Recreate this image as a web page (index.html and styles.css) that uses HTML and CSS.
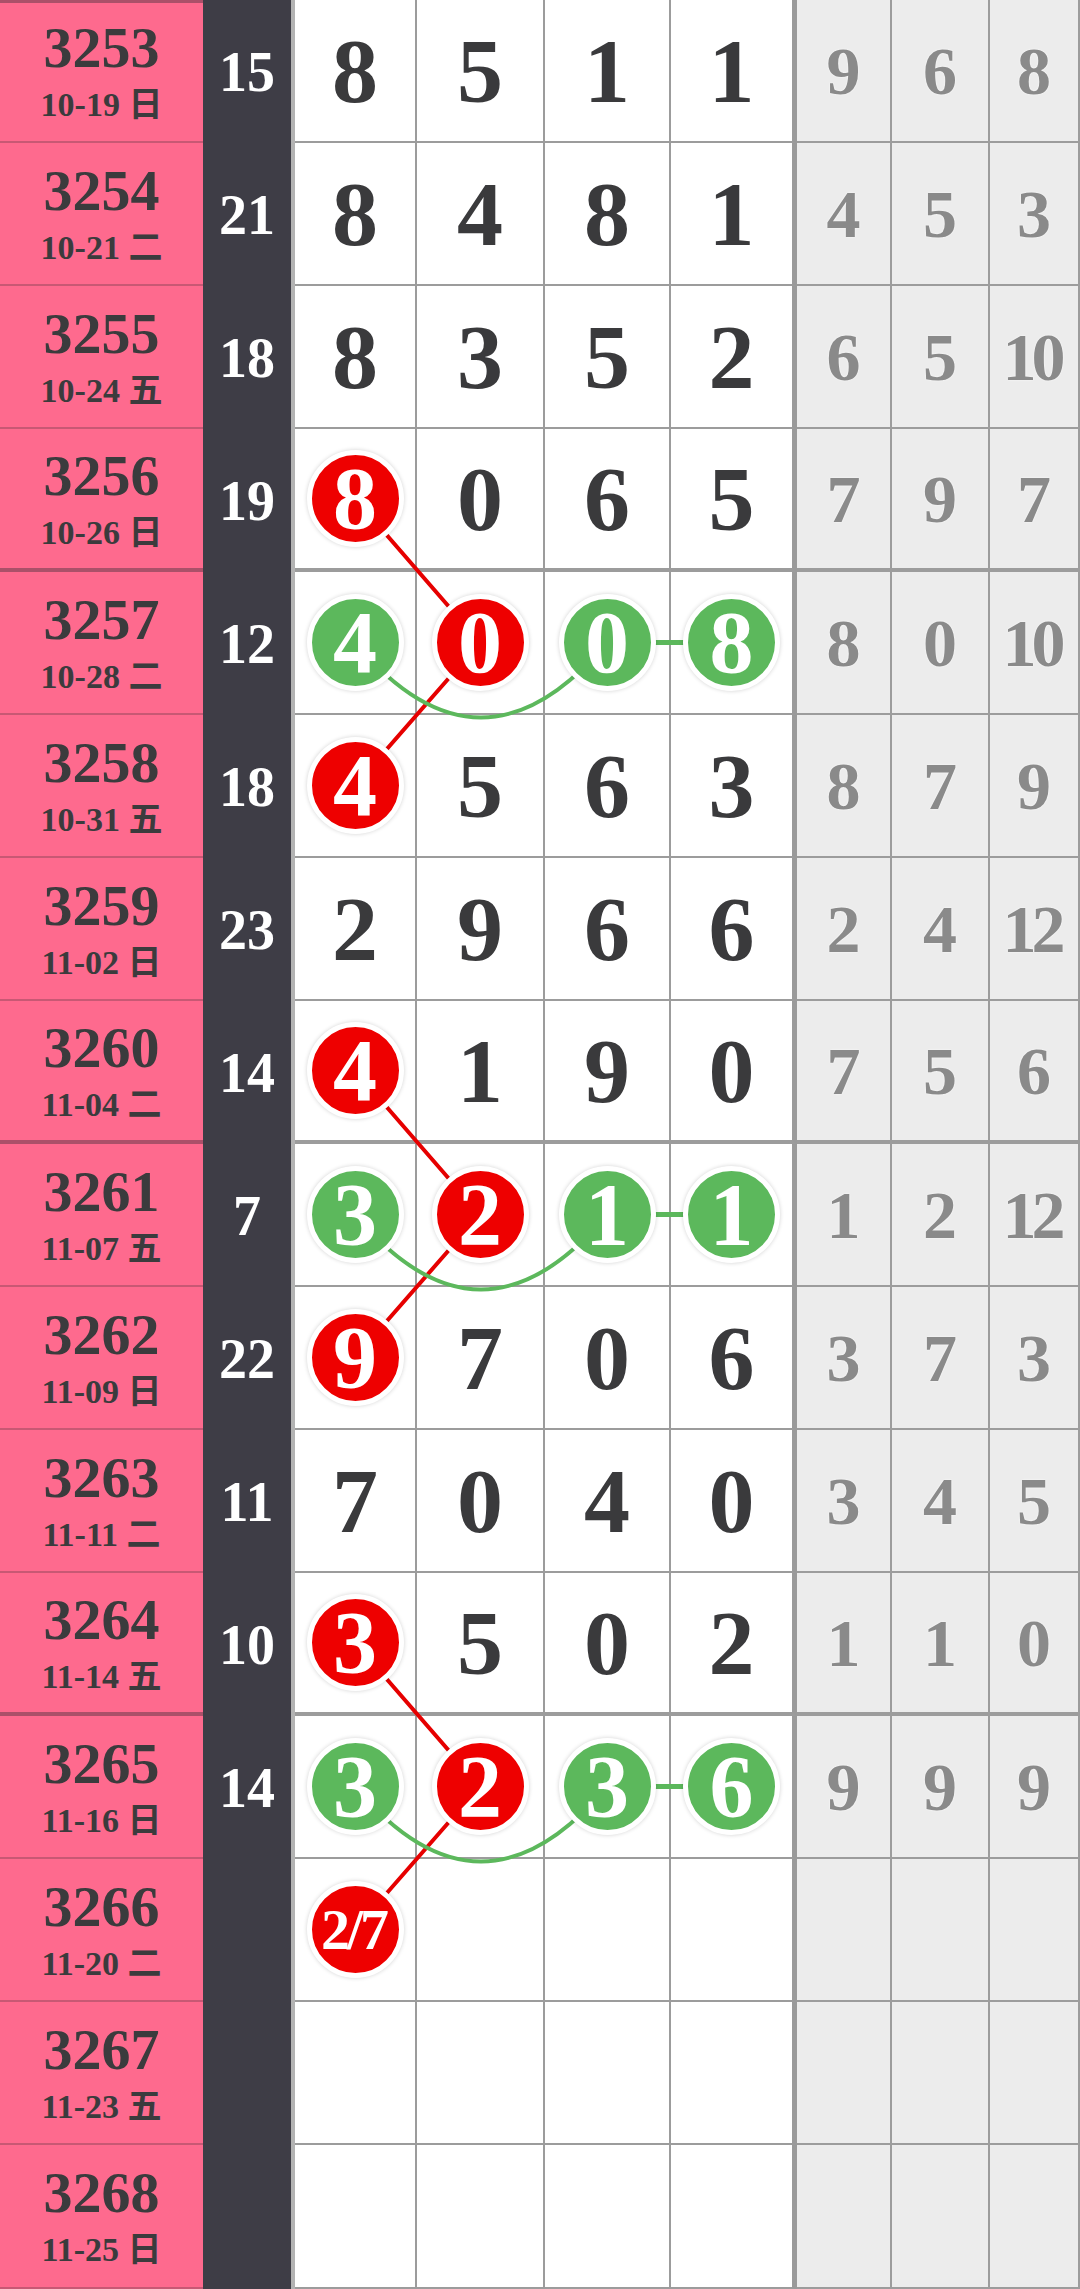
FILE: index.html
```html
<!DOCTYPE html>
<html lang="zh">
<head>
<meta charset="utf-8">
<title>走势图</title>
<link rel="stylesheet" href="styles.css">
</head>
<body>
<div class="board">
  <div class="row first">
    <div class="issue"><div class="no">3253</div><div class="dt">10-19 <span class="wk">日</span></div></div>
    <div class="sum">15</div>
    <div class="d">8</div><div class="d">5</div><div class="d">1</div><div class="d c4">1</div>
    <div class="g">9</div><div class="g">6</div><div class="g">8</div>
  </div>
  <div class="row">
    <div class="issue"><div class="no">3254</div><div class="dt">10-21 <span class="wk">二</span></div></div>
    <div class="sum">21</div>
    <div class="d">8</div><div class="d">4</div><div class="d">8</div><div class="d c4">1</div>
    <div class="g">4</div><div class="g">5</div><div class="g">3</div>
  </div>
  <div class="row">
    <div class="issue"><div class="no">3255</div><div class="dt">10-24 <span class="wk">五</span></div></div>
    <div class="sum">18</div>
    <div class="d">8</div><div class="d">3</div><div class="d">5</div><div class="d c4">2</div>
    <div class="g">6</div><div class="g">5</div><div class="g two">10</div>
  </div>
  <div class="row thick">
    <div class="issue"><div class="no">3256</div><div class="dt">10-26 <span class="wk">日</span></div></div>
    <div class="sum">19</div>
    <div class="d"><span class="ball red">8</span></div><div class="d">0</div><div class="d">6</div><div class="d c4">5</div>
    <div class="g">7</div><div class="g">9</div><div class="g">7</div>
  </div>
  <div class="row">
    <div class="issue"><div class="no">3257</div><div class="dt">10-28 <span class="wk">二</span></div></div>
    <div class="sum">12</div>
    <div class="d"><span class="ball green">4</span></div><div class="d"><span class="ball red">0</span></div><div class="d"><span class="ball green">0</span></div><div class="d c4"><span class="ball green">8</span></div>
    <div class="g">8</div><div class="g">0</div><div class="g two">10</div>
  </div>
  <div class="row">
    <div class="issue"><div class="no">3258</div><div class="dt">10-31 <span class="wk">五</span></div></div>
    <div class="sum">18</div>
    <div class="d"><span class="ball red">4</span></div><div class="d">5</div><div class="d">6</div><div class="d c4">3</div>
    <div class="g">8</div><div class="g">7</div><div class="g">9</div>
  </div>
  <div class="row">
    <div class="issue"><div class="no">3259</div><div class="dt">11-02 <span class="wk">日</span></div></div>
    <div class="sum">23</div>
    <div class="d">2</div><div class="d">9</div><div class="d">6</div><div class="d c4">6</div>
    <div class="g">2</div><div class="g">4</div><div class="g two">12</div>
  </div>
  <div class="row thick">
    <div class="issue"><div class="no">3260</div><div class="dt">11-04 <span class="wk">二</span></div></div>
    <div class="sum">14</div>
    <div class="d"><span class="ball red">4</span></div><div class="d">1</div><div class="d">9</div><div class="d c4">0</div>
    <div class="g">7</div><div class="g">5</div><div class="g">6</div>
  </div>
  <div class="row">
    <div class="issue"><div class="no">3261</div><div class="dt">11-07 <span class="wk">五</span></div></div>
    <div class="sum">7</div>
    <div class="d"><span class="ball green">3</span></div><div class="d"><span class="ball red">2</span></div><div class="d"><span class="ball green">1</span></div><div class="d c4"><span class="ball green">1</span></div>
    <div class="g">1</div><div class="g">2</div><div class="g two">12</div>
  </div>
  <div class="row">
    <div class="issue"><div class="no">3262</div><div class="dt">11-09 <span class="wk">日</span></div></div>
    <div class="sum">22</div>
    <div class="d"><span class="ball red">9</span></div><div class="d">7</div><div class="d">0</div><div class="d c4">6</div>
    <div class="g">3</div><div class="g">7</div><div class="g">3</div>
  </div>
  <div class="row">
    <div class="issue"><div class="no">3263</div><div class="dt">11-11 <span class="wk">二</span></div></div>
    <div class="sum">11</div>
    <div class="d">7</div><div class="d">0</div><div class="d">4</div><div class="d c4">0</div>
    <div class="g">3</div><div class="g">4</div><div class="g">5</div>
  </div>
  <div class="row thick">
    <div class="issue"><div class="no">3264</div><div class="dt">11-14 <span class="wk">五</span></div></div>
    <div class="sum">10</div>
    <div class="d"><span class="ball red">3</span></div><div class="d">5</div><div class="d">0</div><div class="d c4">2</div>
    <div class="g">1</div><div class="g">1</div><div class="g">0</div>
  </div>
  <div class="row">
    <div class="issue"><div class="no">3265</div><div class="dt">11-16 <span class="wk">日</span></div></div>
    <div class="sum">14</div>
    <div class="d"><span class="ball green">3</span></div><div class="d"><span class="ball red">2</span></div><div class="d"><span class="ball green">3</span></div><div class="d c4"><span class="ball green">6</span></div>
    <div class="g">9</div><div class="g">9</div><div class="g">9</div>
  </div>
  <div class="row">
    <div class="issue"><div class="no">3266</div><div class="dt">11-20 <span class="wk">二</span></div></div>
    <div class="sum"></div>
    <div class="d"><span class="ball red small">2/7</span></div><div class="d"></div><div class="d"></div><div class="d c4"></div>
    <div class="g"></div><div class="g"></div><div class="g"></div>
  </div>
  <div class="row">
    <div class="issue"><div class="no">3267</div><div class="dt">11-23 <span class="wk">五</span></div></div>
    <div class="sum"></div>
    <div class="d"></div><div class="d"></div><div class="d"></div><div class="d c4"></div>
    <div class="g"></div><div class="g"></div><div class="g"></div>
  </div>
  <div class="row last">
    <div class="issue"><div class="no">3268</div><div class="dt">11-25 <span class="wk">日</span></div></div>
    <div class="sum"></div>
    <div class="d"></div><div class="d"></div><div class="d"></div><div class="d c4"></div>
    <div class="g"></div><div class="g"></div><div class="g"></div>
  </div>

  <svg class="links" width="1080" height="2289" viewBox="0 0 1080 2289" xmlns="http://www.w3.org/2000/svg">
    <g class="red-links" fill="none" stroke="#e60000" stroke-width="4" stroke-linejoin="round">
      <polyline points="355,498.5 480,642.5 355,785.5"/>
      <polyline points="355,1070.5 480,1214.5 355,1357.5"/>
      <polyline points="355,1642.5 480,1786.5 355,1929.5"/>
    </g>
    <g class="green-links" fill="none" stroke="#5cb85c" stroke-width="4">
      <path d="M355 642.5 Q481 792.5 607 642.5"/>
      <path d="M607 642.5 L731.5 642.5" stroke-width="5"/>
      <path d="M355 1214.5 Q481 1364.5 607 1214.5"/>
      <path d="M607 1214.5 L731.5 1214.5" stroke-width="5"/>
      <path d="M355 1786.5 Q481 1936.5 607 1786.5"/>
      <path d="M607 1786.5 L731.5 1786.5" stroke-width="5"/>
    </g>
  </svg>
</div>
</body>
</html>
```

FILE: styles.css
```css
html, body {
  margin: 0;
  padding: 0;
  background: #ffffff;
}

body {
  font-family: "Liberation Serif", "Noto Sans CJK SC", serif;
  font-weight: bold;
}

.board {
  position: relative;
  width: 1080px;
  height: 2289px;
  overflow: hidden;
}

.row {
  display: grid;
  grid-template-columns: 203px 92px 122px 128px 126px 126px 95px 98px 90px;
  height: 143px;
}

.row.last {
  height: 144px;
}

.row > div {
  box-sizing: border-box;
  display: flex;
  align-items: center;
  justify-content: center;
}

/* issue column */
.issue {
  flex-direction: column;
  background: #fe6a8e;
  color: #3b3b3d;
  border-bottom: 2px solid #c85874;
}

.row.first .issue {
  box-shadow: inset 0 3px 0 #ab5069;
}

.row.thick .issue {
  border-bottom: 4px solid #ab5069;
}

.no {
  font-size: 58px;
  line-height: 68px;
}

.dt {
  font-size: 34px;
  line-height: 46px;
}

.wk {
  font-family: "Noto Sans CJK SC", sans-serif;
  font-weight: 700;
  line-height: 0;
}

/* sum column */
.sum {
  background: #3e3d46;
  color: #ffffff;
  font-size: 56px;
  line-height: 1;
  border-right: 4px solid #b3b3b3;
}

/* digit columns */
.d {
  background: #ffffff;
  color: #3a3a3c;
  font-size: 92px;
  line-height: 1;
  border-right: 2px solid #9c9c9c;
  border-bottom: 2px solid #9c9c9c;
}

.d.c4 {
  border-right: 5px solid #9a9a9a;
}

.g {
  background: #ececec;
  color: #8a8a8a;
  font-size: 68px;
  line-height: 1;
  border-right: 2px solid #9c9c9c;
  border-bottom: 2px solid #9c9c9c;
  text-shadow: 0 0 2px #ffffff;
}

.g.two {
  letter-spacing: -5px;
  padding-right: 0;
  text-indent: -5px;
}

.row.thick .d,
.row.thick .g {
  border-bottom-width: 4px;
}

/* balls */
.ball {
  position: relative;
  z-index: 2;
  display: flex;
  align-items: center;
  justify-content: center;
  width: 87px;
  height: 87px;
  border: 5px solid #ffffff;
  border-radius: 50%;
  color: #ffffff;
  font-size: 88px;
  line-height: 87px;
  box-shadow: 0 0 4px rgba(0, 0, 0, 0.18);
}

.ball.red {
  background: #ee0000;
}

.ball.green {
  background: #5cb85c;
}

.ball.small {
  font-size: 58px;
  letter-spacing: -3px;
  text-indent: -3px;
}

.links {
  position: absolute;
  left: 0;
  top: 0;
  z-index: 1;
  pointer-events: none;
}
```
